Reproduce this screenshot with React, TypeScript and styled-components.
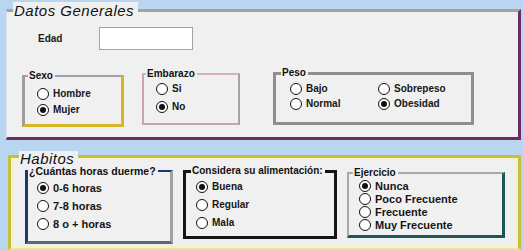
import React from "react";
import styled, { createGlobalStyle } from "styled-components";

const Global = createGlobalStyle`
  html, body { margin: 0; padding: 0; }
  body {
    background: #b9d6f0;
    font-family: "Liberation Sans", Arial, sans-serif;
    width: 523px;
    height: 250px;
    overflow: hidden;
  }
`;

const Page = styled.div`
  display: flex;
  flex-direction: column;
  align-items: flex-start;
  padding: 9px 0 0 6px;
  width: 523px;
  box-sizing: border-box;
`;

type Edges = { $bt: string; $br: string; $bb: string; $bl: string };

const Panel = styled.section<Edges & { $w: number; $h: number; $mt: number; $ml: number; $glow?: string }>`
  display: flex;
  flex-direction: column;
  box-sizing: border-box;
  width: ${(p) => p.$w}px;
  height: ${(p) => p.$h}px;
  margin: ${(p) => p.$mt}px 0 0 ${(p) => p.$ml}px;
  background: #f0f0f0;
  border-top: ${(p) => p.$bt};
  border-right: ${(p) => p.$br};
  border-bottom: ${(p) => p.$bb};
  border-left: ${(p) => p.$bl};
  box-shadow: ${(p) => (p.$glow ? `inset 0 0 0 2px ${p.$glow}` : "none")};
`;

const PanelTitle = styled.h2<{ $mt: number; $ml: number; $lh: number }>`
  align-self: flex-start;
  margin: ${(p) => p.$mt}px 0 0 ${(p) => p.$ml}px;
  padding: 0 4px 0 1px;
  background: #f0f0f0;
  font: italic 15px/${(p) => p.$lh}px "Liberation Sans", Arial, sans-serif;
  letter-spacing: 0.5px;
  color: #111;
`;

const EdadRow = styled.div`
  display: flex;
  align-items: center;
  margin-top: 8px;
  padding-left: 31px;
`;

const FieldLabel = styled.span`
  width: 61px;
  font: bold 10px/12px "Liberation Sans", Arial, sans-serif;
  color: #1a1a1a;
`;

const TextBox = styled.input`
  box-sizing: border-box;
  width: 94px;
  height: 23px;
  margin: 0;
  padding: 0 3px;
  background: #fff;
  border: 1px solid #a2a2a2;
  outline: none;
`;

const GroupRow = styled.div<{ $mt: number }>`
  display: flex;
  align-items: flex-start;
  margin-top: ${(p) => p.$mt}px;
`;

const Group = styled.fieldset<Edges & { $w: number; $h: number; $mt: number; $ml: number }>`
  display: flex;
  flex-direction: column;
  box-sizing: border-box;
  min-width: 0;
  width: ${(p) => p.$w}px;
  height: ${(p) => p.$h}px;
  margin: ${(p) => p.$mt}px 0 0 ${(p) => p.$ml}px;
  padding: 0;
  border-top: ${(p) => p.$bt};
  border-right: ${(p) => p.$br};
  border-bottom: ${(p) => p.$bb};
  border-left: ${(p) => p.$bl};
`;

const GroupTitle = styled.span<{ $mt: number; $ml: number; $size: number }>`
  align-self: flex-start;
  margin: ${(p) => p.$mt}px 0 0 ${(p) => p.$ml}px;
  padding: 0 2px 0 1px;
  background: #f0f0f0;
  font: bold ${(p) => p.$size}px/10px "Liberation Sans", Arial, sans-serif;
  color: #111;
  white-space: nowrap;
`;

const Options = styled.div<{ $pt: number; $pl: number; $row: number; $rows: number; $cols: string }>`
  display: grid;
  grid-auto-flow: column;
  grid-template-rows: repeat(${(p) => p.$rows}, ${(p) => p.$row}px);
  grid-template-columns: ${(p) => p.$cols};
  padding: ${(p) => p.$pt}px 0 0 ${(p) => p.$pl}px;
`;

const Option = styled.label<{ $size: number }>`
  display: flex;
  align-items: center;
  gap: 4px;
  font: bold ${(p) => p.$size}px/12px "Liberation Sans", Arial, sans-serif;
  color: #161616;
  white-space: nowrap;
`;

const Dot = styled.span<{ $on: boolean }>`
  flex: none;
  display: grid;
  place-items: center;
  box-sizing: border-box;
  width: 12px;
  height: 12px;
  border-radius: 50%;
  border: 1px solid #111;
  background: #fff;
  &::after {
    content: "";
    width: 6px;
    height: 6px;
    border-radius: 50%;
    background: ${(p) => (p.$on ? "#111" : "transparent")};
  }
`;

type GroupSpec = {
  title: string;
  w: number;
  h: number;
  mt: number;
  ml: number;
  bt: string;
  br: string;
  bb: string;
  bl: string;
  tmt: number;
  tml: number;
  tsize: number;
  pt: number;
  pl: number;
  row: number;
  rows: number;
  cols: string;
  size: number;
  options: string[];
  checked: string;
};

const generales: GroupSpec[] = [
  {
    title: "Sexo", w: 102, h: 52, mt: 3, ml: 15,
    bt: "2px solid #a2a2a2", br: "3px solid #d5b526", bb: "3px solid #d5b526", bl: "3px solid #9e9e9e",
    tmt: -6, tml: 3, tsize: 10, pt: 5, pl: 12, row: 16, rows: 2, cols: "auto", size: 10,
    options: ["Hombre", "Mujer"], checked: "Mujer",
  },
  {
    title: "Embarazo", w: 98, h: 52, mt: 1, ml: 18,
    bt: "2px solid #d3b1b8", br: "2px solid #a9a2a2", bb: "2px solid #bcaaae", bl: "2px solid #cfa3ad",
    tmt: -6, tml: 2, tsize: 10, pt: 1, pl: 12, row: 18, rows: 2, cols: "auto", size: 10,
    options: ["Si", "No"], checked: "No",
  },
  {
    title: "Peso", w: 201, h: 53, mt: 0, ml: 33,
    bt: "3px solid #8f8f8f", br: "3px solid #8f8f8f", bb: "3px solid #8f8f8f", bl: "3px solid #8f8f8f",
    tmt: -7, tml: 5, tsize: 10, pt: 3, pl: 14, row: 15, rows: 2, cols: "88px auto", size: 10,
    options: ["Bajo", "Normal", "Sobrepeso", "Obesidad"], checked: "Obesidad",
  },
];

const habitos: GroupSpec[] = [
  {
    title: "¿Cuántas horas duerme?", w: 148, h: 74, mt: 0, ml: 14,
    bt: "2px solid #183a6e", br: "3px solid #a0a0a0", bb: "3px solid #5d6677", bl: "3px solid #183a6e",
    tmt: -6, tml: 0, tsize: 10.5, pt: 3, pl: 9, row: 18, rows: 3, cols: "auto", size: 11,
    options: ["0-6 horas", "7-8 horas", "8 o + horas"], checked: "0-6 horas",
  },
  {
    title: "Considera su alimentación:", w: 154, h: 69, mt: 0, ml: 10,
    bt: "3px solid #151515", br: "3px solid #151515", bb: "3px solid #151515", bl: "3px solid #151515",
    tmt: -7, tml: 5, tsize: 10, pt: 2, pl: 10, row: 18, rows: 3, cols: "auto", size: 10,
    options: ["Buena", "Regular", "Mala"], checked: "Buena",
  },
  {
    title: "Ejercicio", w: 158, h: 66, mt: 2, ml: 10,
    bt: "2px solid #a9a9a9", br: "3px solid #1d5656", bb: "3px solid #1d5656", bl: "2px solid #a9a9a9",
    tmt: -6, tml: 4, tsize: 10, pt: 1, pl: 10, row: 13, rows: 4, cols: "auto", size: 11,
    options: ["Nunca", "Poco Frecuente", "Frecuente", "Muy Frecuente"], checked: "Nunca",
  },
];

function RadioGroup({ g }: { g: GroupSpec }) {
  return (
    <Group $w={g.w} $h={g.h} $mt={g.mt} $ml={g.ml} $bt={g.bt} $br={g.br} $bb={g.bb} $bl={g.bl}>
      <GroupTitle $mt={g.tmt} $ml={g.tml} $size={g.tsize}>
        {g.title}
      </GroupTitle>
      <Options $pt={g.pt} $pl={g.pl} $row={g.row} $rows={g.rows} $cols={g.cols}>
        {g.options.map((o) => (
          <Option key={o} $size={g.size}>
            <Dot $on={o === g.checked} />
            {o}
          </Option>
        ))}
      </Options>
    </Group>
  );
}

export default function App() {
  return (
    <>
      <Global />
      <Page>
        <Panel
          $w={515}
          $h={131}
          $mt={0}
          $ml={0}
          $bt="3px solid #a3a3a3"
          $br="3px solid #6a2c61"
          $bb="3px solid #6a2c61"
          $bl="1px solid #dbe3ec"
        >
          <PanelTitle $mt={-10} $ml={6} $lh={17}>
            Datos Generales
          </PanelTitle>
          <EdadRow>
            <FieldLabel>Edad</FieldLabel>
            <TextBox readOnly />
          </EdadRow>
          <GroupRow $mt={22}>
            {generales.map((g) => (
              <RadioGroup key={g.title} g={g} />
            ))}
          </GroupRow>
        </Panel>
        <Panel
          $w={513}
          $h={95}
          $mt={15}
          $ml={2}
          $bt="3px solid #c5bf3a"
          $br="3px solid #c5bf3a"
          $bb="2px solid #e6e4a8"
          $bl="3px solid #c5bf3a"
          $glow="#f4f2c8"
        >
          <PanelTitle $mt={-7} $ml={8} $lh={15}>
            Habitos
          </PanelTitle>
          <GroupRow $mt={4}>
            {habitos.map((g) => (
              <RadioGroup key={g.title} g={g} />
            ))}
          </GroupRow>
        </Panel>
      </Page>
    </>
  );
}
